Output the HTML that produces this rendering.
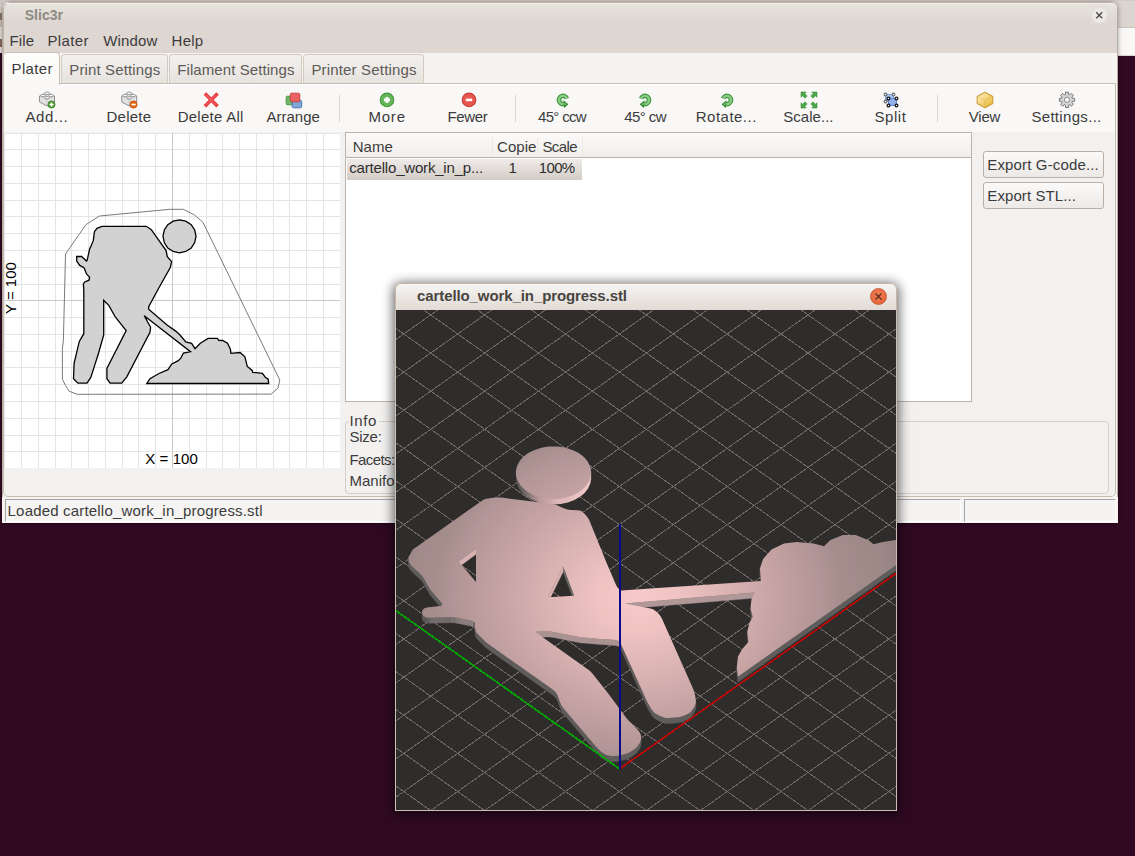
<!DOCTYPE html>
<html><head><meta charset="utf-8">
<style>
*{margin:0;padding:0;box-sizing:border-box}
html,body{width:1135px;height:856px;overflow:hidden;background:#300a23;font-family:"Liberation Sans",sans-serif;color:#3c3c3c}
.a{position:absolute}
.t{position:absolute;white-space:nowrap;font-size:15px;line-height:20px}
#win{left:3px;top:2px;width:1114px;height:520px;border-radius:6px 6px 0 0;background:#f2f1f0;border:1px solid #b5aca4;overflow:hidden}
#title{left:0;top:0;width:1112px;height:50px;background:linear-gradient(#e6e3de,#dfd8d2 40%,#dfd8d2)}
.tab{position:absolute;top:54px;height:29px;border:1px solid #d3cac1;border-bottom:none;border-radius:4px 4px 0 0;background:linear-gradient(#f3f1ef,#e6e2de);color:#5e5a56}
.tb{position:absolute;top:109px;font-size:14px;line-height:16px;white-space:nowrap;text-align:center;width:100px;margin-left:-50px}
.sep{position:absolute;top:95px;width:1px;height:27px;background:#dcd6d0}
.ico{position:absolute;top:91px;width:18px;height:18px;margin-left:-9px}
</style></head><body>
<!-- background windows -->
<div class="a" style="left:0;top:0;width:1135px;height:56px;background:#dcd5cf"></div>
<div class="a" style="left:0;top:0;width:1135px;height:1px;background:#d2cdc8"></div>
<div class="a" style="left:1118px;top:28px;width:17px;height:27px;background:#f9f8f6"></div>
<div class="a" style="left:0;top:0;width:3px;height:5px;background:#cfc9c3"></div>
<div class="a" style="left:0;top:5px;width:3px;height:16px;background:#d8d2cc"></div>
<div class="a" style="left:0;top:13px;width:2px;height:7px;background:#8a7a6a"></div>
<div class="a" style="left:0;top:21px;width:3px;height:6px;background:#c5bfb9"></div>
<div class="a" style="left:0;top:27px;width:3px;height:26px;background:#e6e3e0"></div>
<div class="a" style="left:0;top:39px;width:2px;height:8px;background:#8a6a5a"></div>
<div class="a" style="left:0;top:53px;width:3px;height:3px;background:#300a23"></div>
<div class="a" style="left:1118px;top:27px;width:17px;height:1px;background:#c9c4bf"></div>

<div class="a" style="left:2px;top:1px;width:1116px;height:522px;border-radius:7px 7px 0 0;box-shadow:0 1px 5px rgba(0,0,0,0.35)"></div>
<div id="win" class="a" style="left:2px;top:1px;width:1116px;height:522px;border-radius:7px 7px 0 0;background:#f5f4f2;overflow:hidden">
  <div class="a" style="left:0;top:0;width:1116px;height:51px;background:linear-gradient(#e7e4de,#ded7d1 38%,#ded6d1);border:1px solid #bfb2a6;border-bottom:none;border-radius:7px 7px 0 0"></div>
  <div class="a" style="left:1px;top:1px;width:1114px;height:1px;background:#eeece8"></div>
</div>
<!-- close btn -->
<div class="a" style="left:1090px;top:6px;width:18px;height:18px;background:#e2ddd8;opacity:0.6"></div>
<div class="a" style="left:1091.5px;top:7.5px;width:15.5px;height:15.5px;border-radius:8px;background:#ece9e6"></div>
<svg class="a" style="left:1094px;top:10px" width="11" height="11"><path d="M2.3 2.3L8.2 8.2M8.2 2.3L2.3 8.2" stroke="#4a4744" stroke-width="1.3"/></svg>

<!-- notebook page -->
<div class="a" style="left:3px;top:83px;width:1113px;height:414px;background:#f2f1f0;border:1px solid #c9bdb1;border-radius:0 0 5px 5px"></div>
<div class="a" style="left:4px;top:84px;width:1111px;height:1px;background:#fff"></div>
<!-- toolbar bg -->
<div class="a" style="left:4px;top:85px;width:1111px;height:47px;background:#f9f8f7"></div>
<!-- tabs -->
<div class="tab" style="left:61px;width:107px"></div>
<div class="tab" style="left:169px;width:133px"></div>
<div class="tab" style="left:303px;width:121px"></div>
<div class="a" style="left:3px;top:52px;width:57px;height:33px;border:1px solid #c9bdb1;border-bottom:none;border-radius:4px 4px 0 0;background:linear-gradient(#fdfdfc,#f9f8f7)"></div>

<!-- toolbar -->
<div class="sep" style="left:339px"></div>
<div class="sep" style="left:515px"></div>
<div class="sep" style="left:937px"></div>

<svg class="a" style="left:0;top:0" width="1135" height="130"><g transform="translate(34,88)"><g transform="translate(5,3.5) scale(1.0)">
<path d="M0.5 4.5 L8 1.2 L15.5 4.5 L15.5 10.5 L8 14.5 L0.5 10.5Z" fill="#e2e2e2" stroke="#8f8f8f" stroke-width="1" stroke-linejoin="round"/>
<path d="M0.5 4.5 L8 8.2 L15.5 4.5 M8 8.2 L8 14.5" fill="none" stroke="#8f8f8f" stroke-opacity="0.35" stroke-width="0.8"/>
<ellipse cx="8" cy="1.8" rx="2.4" ry="1.3" fill="#fbfbfb" stroke="#8f8f8f" stroke-width="0.9"/>
<ellipse cx="3.9" cy="4.0" rx="2.3" ry="1.2" fill="#fbfbfb" stroke="#8f8f8f" stroke-width="0.9"/>
<ellipse cx="12.1" cy="4.0" rx="2.3" ry="1.2" fill="#fbfbfb" stroke="#8f8f8f" stroke-width="0.9"/>
<ellipse cx="8" cy="6.2" rx="2.3" ry="1.2" fill="#fbfbfb" stroke="#8f8f8f" stroke-width="0.9"/>
</g><circle cx="17.5" cy="16.5" r="3.5" fill="#4f9e2e" stroke="#2f7a1a" stroke-width="0.8"/><path d="M17.5 14.4v4.2M15.4 16.5h4.2" stroke="#fff" stroke-width="1.5"/></g>
<g transform="translate(117,88)"><g transform="translate(4.2,3.5) scale(1.0)">
<path d="M0.5 4.5 L8 1.2 L15.5 4.5 L15.5 10.5 L8 14.5 L0.5 10.5Z" fill="#e2e2e2" stroke="#8f8f8f" stroke-width="1" stroke-linejoin="round"/>
<path d="M0.5 4.5 L8 8.2 L15.5 4.5 M8 8.2 L8 14.5" fill="none" stroke="#8f8f8f" stroke-opacity="0.35" stroke-width="0.8"/>
<ellipse cx="8" cy="1.8" rx="2.4" ry="1.3" fill="#fbfbfb" stroke="#8f8f8f" stroke-width="0.9"/>
<ellipse cx="3.9" cy="4.0" rx="2.3" ry="1.2" fill="#fbfbfb" stroke="#8f8f8f" stroke-width="0.9"/>
<ellipse cx="12.1" cy="4.0" rx="2.3" ry="1.2" fill="#fbfbfb" stroke="#8f8f8f" stroke-width="0.9"/>
<ellipse cx="8" cy="6.2" rx="2.3" ry="1.2" fill="#fbfbfb" stroke="#8f8f8f" stroke-width="0.9"/>
</g><circle cx="16.5" cy="16.5" r="3.6" fill="#e26a12" stroke="#c24a08" stroke-width="0.8"/><path d="M14.3 16.5h4.4" stroke="#fff" stroke-width="1.6"/></g>
<g transform="translate(199,88)"><path d="M7.2 6.8 L17.3 16.9 M17.3 6.8 L7.2 16.9" stroke="#ea3c42" stroke-width="3.6" stroke-linecap="square"/><path d="M7.2 6.8 L17.3 16.9 M17.3 6.8 L7.2 16.9" stroke="#f57a7e" stroke-width="1.2" stroke-opacity="0.6"/></g>
<g transform="translate(281,88)"><rect x="5.2" y="8.2" width="6.5" height="8.6" rx="1.2" fill="#6fb86a" stroke="#3f8f3a" stroke-width="0.9"/><rect x="11.2" y="12.2" width="9.5" height="7.6" rx="1.4" fill="#7ea6d6" stroke="#3f6fb0" stroke-width="0.9"/><rect x="9.3" y="5.2" width="9.5" height="8.6" rx="1.4" fill="#ea6262" stroke="#c83a3a" stroke-width="0.9"/></g>
<g transform="translate(375,88)"><circle cx="12" cy="11.9" r="6.8" fill="#66b55a" stroke="#3e9a36" stroke-width="1.1"/><path d="M12 8.9v6M9 11.9h6" stroke="#fff" stroke-width="2.8"/></g>
<g transform="translate(457,88)"><circle cx="12" cy="11.9" r="6.8" fill="#e8574f" stroke="#c63a34" stroke-width="1.1"/><path d="M8.8 11.9h6.4" stroke="#fff" stroke-width="2.6"/></g>
<g transform="translate(551,88)"><path d="M15.9 10.5 A4.1 4.1 0 1 0 13.3 15.9" fill="none" stroke="#3c963a" stroke-width="4.6"/>
<path d="M15.9 10.5 A4.1 4.1 0 1 0 13.3 15.9" fill="none" stroke="#8ccc86" stroke-width="2.4"/>
<path d="M12.4 12.2 L17.4 16.3 L13.1 20.0Z" fill="#2f862f"/>
<path d="M13.3 14.0 L15.6 16.2 L13.6 17.8Z" fill="#7cc276"/></g>
<g transform="translate(633,88)"><g transform="translate(24,0) scale(-1,1)"><path d="M15.9 10.5 A4.1 4.1 0 1 0 13.3 15.9" fill="none" stroke="#3c963a" stroke-width="4.6"/>
<path d="M15.9 10.5 A4.1 4.1 0 1 0 13.3 15.9" fill="none" stroke="#8ccc86" stroke-width="2.4"/>
<path d="M12.4 12.2 L17.4 16.3 L13.1 20.0Z" fill="#2f862f"/>
<path d="M13.3 14.0 L15.6 16.2 L13.6 17.8Z" fill="#7cc276"/></g></g>
<g transform="translate(715,88)"><g transform="translate(24,0) scale(-1,1)"><path d="M15.9 10.5 A4.1 4.1 0 1 0 13.3 15.9" fill="none" stroke="#3c963a" stroke-width="4.6"/>
<path d="M15.9 10.5 A4.1 4.1 0 1 0 13.3 15.9" fill="none" stroke="#8ccc86" stroke-width="2.4"/>
<path d="M12.4 12.2 L17.4 16.3 L13.1 20.0Z" fill="#2f862f"/>
<path d="M13.3 14.0 L15.6 16.2 L13.6 17.8Z" fill="#7cc276"/></g></g>
<g transform="translate(797,88)"><g><path d="M4 4 H9.2 L7.8 5.6 L10.2 8.0 L8.0 10.2 L5.6 7.8 L4 9.2Z" fill="#4aa84a" stroke="#3a8f3a" stroke-width="0.6"/></g><g transform="translate(24,0) scale(-1,1)"><path d="M4 4 H9.2 L7.8 5.6 L10.2 8.0 L8.0 10.2 L5.6 7.8 L4 9.2Z" fill="#4aa84a" stroke="#3a8f3a" stroke-width="0.6"/></g><g transform="translate(0,24) scale(1,-1)"><path d="M4 4 H9.2 L7.8 5.6 L10.2 8.0 L8.0 10.2 L5.6 7.8 L4 9.2Z" fill="#4aa84a" stroke="#3a8f3a" stroke-width="0.6"/></g><g transform="translate(24,24) scale(-1,-1)"><path d="M4 4 H9.2 L7.8 5.6 L10.2 8.0 L8.0 10.2 L5.6 7.8 L4 9.2Z" fill="#4aa84a" stroke="#3a8f3a" stroke-width="0.6"/></g></g>
<g transform="translate(879,88)"><rect x="6.5" y="6.5" width="8" height="7" fill="#a9c4f0" stroke="#7aa0e8" stroke-width="1"/><rect x="9.5" y="10.5" width="8" height="7" fill="#8fb0e8" stroke="#5a88e0" stroke-width="1"/><circle cx="6.5" cy="6.5" r="1.4" fill="#fff" stroke="#666" stroke-width="1.1"/><circle cx="14.5" cy="6.5" r="1.4" fill="#fff" stroke="#666" stroke-width="1.1"/><circle cx="6.5" cy="13.5" r="1.4" fill="#fff" stroke="#666" stroke-width="1.1"/><circle cx="9.5" cy="10.5" r="1.4" fill="#fff" stroke="#111" stroke-width="1.2"/><circle cx="17.5" cy="10.5" r="1.4" fill="#fff" stroke="#111" stroke-width="1.2"/><circle cx="9.5" cy="17.5" r="1.4" fill="#fff" stroke="#111" stroke-width="1.2"/><circle cx="17.5" cy="17.5" r="1.4" fill="#fff" stroke="#111" stroke-width="1.2"/></g>
<g transform="translate(973,88)"><defs><linearGradient id="vg" x1="0" y1="0" x2="1" y2="1"><stop offset="0" stop-color="#fff3cc"/><stop offset="1" stop-color="#e8b22a"/></linearGradient></defs>
<path d="M12 4.3 L19.8 8.4 L19.8 15.4 L12 19.7 L4.2 15.4 L4.2 8.4Z" fill="url(#vg)" stroke="#cf9d3a" stroke-width="1.1" stroke-linejoin="round"/>
<path d="M5.5 9 L12 12.3 L18.5 9 M12 12.3 V18.5" fill="none" stroke="#d9a845" stroke-width="0.8" stroke-opacity="0.6"/></g>
<g transform="translate(1055,88)"><path d="M17.41 10.36 L19.64 10.25 L19.64 13.35 L17.41 13.24 L16.84 14.61 L18.50 16.11 L16.31 18.30 L14.81 16.64 L13.44 17.21 L13.55 19.44 L10.45 19.44 L10.56 17.21 L9.19 16.64 L7.69 18.30 L5.50 16.11 L7.16 14.61 L6.59 13.24 L4.36 13.35 L4.36 10.25 L6.59 10.36 L7.16 8.99 L5.50 7.49 L7.69 5.30 L9.19 6.96 L10.56 6.39 L10.45 4.16 L13.55 4.16 L13.44 6.39 L14.81 6.96 L16.31 5.30 L18.50 7.49 L16.84 8.99Z" fill="#d4d4d4" stroke="#6f6f6f" stroke-width="0.9" stroke-linejoin="round"/><circle cx="12" cy="11.8" r="2.6" fill="#fafafa" stroke="#7a7a7a" stroke-width="0.9"/></g></svg>
<!-- 2D plater canvas -->
<svg class="a" style="left:0;top:0" width="345" height="470">
  <rect x="5" y="133" width="335" height="335" fill="#fff"/>
  <g stroke="#e5e5e5" stroke-width="1" shape-rendering="crispEdges"><line x1="4.70" y1="133" x2="4.70" y2="468"/>
<line x1="5" y1="133.00" x2="340" y2="133.00"/>
<line x1="21.48" y1="133" x2="21.48" y2="468"/>
<line x1="5" y1="149.78" x2="340" y2="149.78"/>
<line x1="38.26" y1="133" x2="38.26" y2="468"/>
<line x1="5" y1="166.56" x2="340" y2="166.56"/>
<line x1="55.04" y1="133" x2="55.04" y2="468"/>
<line x1="5" y1="183.34" x2="340" y2="183.34"/>
<line x1="71.82" y1="133" x2="71.82" y2="468"/>
<line x1="5" y1="200.12" x2="340" y2="200.12"/>
<line x1="88.60" y1="133" x2="88.60" y2="468"/>
<line x1="5" y1="216.90" x2="340" y2="216.90"/>
<line x1="105.38" y1="133" x2="105.38" y2="468"/>
<line x1="5" y1="233.68" x2="340" y2="233.68"/>
<line x1="122.16" y1="133" x2="122.16" y2="468"/>
<line x1="5" y1="250.46" x2="340" y2="250.46"/>
<line x1="138.94" y1="133" x2="138.94" y2="468"/>
<line x1="5" y1="267.24" x2="340" y2="267.24"/>
<line x1="155.72" y1="133" x2="155.72" y2="468"/>
<line x1="5" y1="284.02" x2="340" y2="284.02"/>
<line x1="172.50" y1="133" x2="172.50" y2="468"/>
<line x1="5" y1="300.80" x2="340" y2="300.80"/>
<line x1="189.28" y1="133" x2="189.28" y2="468"/>
<line x1="5" y1="317.58" x2="340" y2="317.58"/>
<line x1="206.06" y1="133" x2="206.06" y2="468"/>
<line x1="5" y1="334.36" x2="340" y2="334.36"/>
<line x1="222.84" y1="133" x2="222.84" y2="468"/>
<line x1="5" y1="351.14" x2="340" y2="351.14"/>
<line x1="239.62" y1="133" x2="239.62" y2="468"/>
<line x1="5" y1="367.92" x2="340" y2="367.92"/>
<line x1="256.40" y1="133" x2="256.40" y2="468"/>
<line x1="5" y1="384.70" x2="340" y2="384.70"/>
<line x1="273.18" y1="133" x2="273.18" y2="468"/>
<line x1="5" y1="401.48" x2="340" y2="401.48"/>
<line x1="289.96" y1="133" x2="289.96" y2="468"/>
<line x1="5" y1="418.26" x2="340" y2="418.26"/>
<line x1="306.74" y1="133" x2="306.74" y2="468"/>
<line x1="5" y1="435.04" x2="340" y2="435.04"/>
<line x1="323.52" y1="133" x2="323.52" y2="468"/>
<line x1="5" y1="451.82" x2="340" y2="451.82"/></g>
  <line x1="172.5" y1="133" x2="172.5" y2="468" stroke="#c8c8c8" stroke-width="1"/>
  <line x1="5" y1="300.5" x2="340" y2="300.5" stroke="#c8c8c8" stroke-width="1"/>
  <polygon points="85.9,224.7 99.5,216.0 169.8,209.3 183.4,209.3 194.6,215.0 203.0,222.4 279.8,380.0 278.0,388.0 271.1,394.1 77.4,394.3 69.0,391.2 65.5,385.5 62.4,379.2 62.4,349.1 63.4,340.0 65.5,254.0" fill="none" stroke="#7a7a7a" stroke-width="1"/>
  <polygon points="101.9,226.3 146.3,226.3 151.3,229.6 166.1,250.6 167.3,256.7 171.6,261.7 170.4,267.2 157.7,290.0 148.7,306.7 148.7,309.3 166.7,324.7 175.7,331.1 180.0,335.0 185.8,341.8 191.6,343.3 195.0,348.6 200.3,343.3 208.1,338.4 217.3,338.4 218.8,340.3 222.6,340.5 227.5,343.3 230.4,349.1 230.9,353.4 240.1,352.5 244.9,356.8 247.3,366.5 252.2,370.4 252.7,372.3 262.4,373.3 265.3,377.2 268.2,379.1 268.7,383.5 146.8,383.5 150.0,378.7 159.0,373.5 168.0,369.7 171.8,363.9 178.3,360.7 180.8,358.1 183.4,353.0 190.5,351.7 144.2,315.7 150.6,327.3 150.0,332.4 126.8,376.8 121.7,383.2 110.1,383.2 106.9,378.7 106.9,368.4 126.2,330.5 120.4,323.4 115.3,317.0 108.8,305.4 103.7,300.3 103.7,335.0 98.6,353.0 94.1,367.1 90.8,377.4 87.0,383.2 78.0,383.2 73.5,378.7 74.1,363.3 79.3,341.4 83.8,333.7 83.8,290.0 83.4,283.9 84.7,282.0 89.0,280.2 89.6,277.1 86.5,274.0 84.0,267.8 79.7,265.4 76.7,261.0 76.7,256.5 81.6,256.5 86.5,261.0 87.1,260.4 89.6,249.3 93.3,240.7 94.5,231.5 97.0,228.4" fill="#d2d2d2" stroke="#000" stroke-width="1.3"/>
  <polygon points="196.0,236.3 194.7,242.6 191.2,248.0 185.8,251.5 179.5,252.8 173.2,251.5 167.8,248.0 164.3,242.6 163.0,236.3 164.3,230.0 167.8,224.6 173.2,221.1 179.5,219.8 185.8,221.1 191.2,224.6 194.7,230.0" fill="#d2d2d2" stroke="#000" stroke-width="1.3"/>
</svg>
<div class="t" style="left:1px;top:300px;color:#000;transform:rotate(-90deg);transform-origin:0 0;margin-top:14px">Y = 100</div>

<!-- list view -->
<div class="a" style="left:345px;top:132px;width:627px;height:270px;background:#fff;border:1px solid #bdb4ad"></div>
<div class="a" style="left:346px;top:133px;width:625px;height:25px;background:linear-gradient(#fbfaf9,#f1eeeb);border-bottom:1px solid #b9b0a8"></div>
<div class="a" style="left:492px;top:137px;width:1px;height:19px;background:#ece8e4"></div>
<div class="a" style="left:537px;top:137px;width:1px;height:19px;background:#ece8e4"></div>
<div class="a" style="left:582px;top:137px;width:1px;height:19px;background:#ece8e4"></div>
<div class="a" style="left:347px;top:159px;width:235px;height:21px;background:linear-gradient(#efebe8,#d3ccc6)"></div>

<!-- buttons -->
<div class="a" style="left:983px;top:151px;width:121px;height:27px;border:1px solid #b9afa7;border-radius:3px;background:linear-gradient(#fbfaf9,#ece9e6)"></div>
<div class="a" style="left:983px;top:182px;width:121px;height:27px;border:1px solid #b9afa7;border-radius:3px;background:linear-gradient(#fbfaf9,#ece9e6)"></div>

<!-- info group -->
<div class="a" style="left:345px;top:421px;width:764px;height:73px;border:1px solid #d6cfc9;border-radius:4px"></div>
<div class="a" style="left:349px;top:414px;width:30px;height:12px;background:#f2f1f0"></div>

<!-- status bar -->
<div class="a" style="left:2px;top:497px;width:1116px;height:26px;background:#f5f4f2"></div>
<div class="a" style="left:5px;top:499px;width:956px;height:23px;border-left:1px solid #a3a3a3;border-top:1px solid #a3a3a3;border-right:1px solid #fff;border-bottom:1px solid #fff"></div>
<div class="a" style="left:964px;top:499px;width:152px;height:23px;border-left:1px solid #a3a3a3;border-top:1px solid #a3a3a3;border-right:1px solid #fff;border-bottom:1px solid #fff"></div>

<div class="t" style="left:24.7px;top:4.7px;font-size:14px;font-weight:700;color:#8e8983;letter-spacing:0.040px;">Slic3r</div>
<div class="t" style="left:9.6px;top:30.9px;font-size:15px;font-weight:400;color:#3c3c3c;letter-spacing:0.100px;">File</div>
<div class="t" style="left:47.5px;top:30.9px;font-size:15px;font-weight:400;color:#3c3c3c;letter-spacing:0.340px;">Plater</div>
<div class="t" style="left:103.2px;top:30.9px;font-size:15px;font-weight:400;color:#3c3c3c;letter-spacing:0.160px;">Window</div>
<div class="t" style="left:171.6px;top:30.9px;font-size:15px;font-weight:400;color:#3c3c3c;letter-spacing:0.233px;">Help</div>
<div class="t" style="left:11.6px;top:58.6px;font-size:15px;font-weight:400;color:#3c3c3c;letter-spacing:0.320px;">Plater</div>
<div class="t" style="left:69.3px;top:59.8px;font-size:15px;font-weight:400;color:#5e5a56;letter-spacing:0.131px;">Print Settings</div>
<div class="t" style="left:177.3px;top:59.8px;font-size:15px;font-weight:400;color:#5e5a56;letter-spacing:0.075px;">Filament Settings</div>
<div class="t" style="left:311.4px;top:59.8px;font-size:15px;font-weight:400;color:#5e5a56;letter-spacing:0.173px;">Printer Settings</div>
<div class="t" style="left:25.5px;top:106.7px;font-size:15px;font-weight:400;color:#3c3c3c;letter-spacing:0.620px;">Add...</div>
<div class="t" style="left:106.5px;top:106.7px;font-size:15px;font-weight:400;color:#3c3c3c;letter-spacing:0.240px;">Delete</div>
<div class="t" style="left:177.7px;top:106.7px;font-size:15px;font-weight:400;color:#3c3c3c;letter-spacing:0.256px;">Delete All</div>
<div class="t" style="left:266.6px;top:106.7px;font-size:15px;font-weight:400;color:#3c3c3c;letter-spacing:-0.017px;">Arrange</div>
<div class="t" style="left:368.5px;top:106.7px;font-size:15px;font-weight:400;color:#3c3c3c;letter-spacing:0.767px;">More</div>
<div class="t" style="left:447.5px;top:106.7px;font-size:15px;font-weight:400;color:#3c3c3c;letter-spacing:-0.375px;">Fewer</div>
<div class="t" style="left:538.0px;top:106.7px;font-size:15px;font-weight:400;color:#3c3c3c;letter-spacing:-0.667px;">45° ccw</div>
<div class="t" style="left:624.3px;top:106.7px;font-size:15px;font-weight:400;color:#3c3c3c;letter-spacing:-0.600px;">45° cw</div>
<div class="t" style="left:695.8px;top:106.7px;font-size:15px;font-weight:400;color:#3c3c3c;letter-spacing:0.475px;">Rotate...</div>
<div class="t" style="left:783.2px;top:106.7px;font-size:15px;font-weight:400;color:#3c3c3c;letter-spacing:0.043px;">Scale...</div>
<div class="t" style="left:874.4px;top:106.7px;font-size:15px;font-weight:400;color:#3c3c3c;letter-spacing:0.575px;">Split</div>
<div class="t" style="left:968.8px;top:106.7px;font-size:15px;font-weight:400;color:#3c3c3c;letter-spacing:-0.200px;">View</div>
<div class="t" style="left:1031.4px;top:106.7px;font-size:15px;font-weight:400;color:#3c3c3c;letter-spacing:0.320px;">Settings...</div>
<div class="t" style="left:352.7px;top:136.7px;font-size:15px;font-weight:400;color:#3c3c3c;letter-spacing:0.067px;">Name</div>
<div class="t" style="left:497.0px;top:136.7px;font-size:15px;font-weight:400;color:#3c3c3c;letter-spacing:0.050px;">Copie</div>
<div class="t" style="left:542.4px;top:136.7px;font-size:15px;font-weight:400;color:#3c3c3c;letter-spacing:-0.575px;">Scale</div>
<div class="t" style="left:349.3px;top:157.9px;font-size:15px;font-weight:400;color:#2e2e2e;letter-spacing:-0.190px;">cartello_work_in_p...</div>
<div class="t" style="left:508.5px;top:157.9px;font-size:15px;font-weight:400;color:#2e2e2e;letter-spacing:0.000px;">1</div>
<div class="t" style="left:538.8px;top:157.9px;font-size:15px;font-weight:400;color:#2e2e2e;letter-spacing:-0.667px;">100%</div>
<div class="t" style="left:987.3px;top:155.0px;font-size:15px;font-weight:400;color:#3c3c3c;letter-spacing:0.147px;">Export G-code...</div>
<div class="t" style="left:987.3px;top:186.4px;font-size:15px;font-weight:400;color:#3c3c3c;letter-spacing:0.083px;">Export STL...</div>
<div class="t" style="left:349.5px;top:410.6px;font-size:15px;font-weight:400;color:#3c3c3c;letter-spacing:0.600px;">Info</div>
<div class="t" style="left:349.5px;top:427.4px;font-size:15px;font-weight:400;color:#3c3c3c;letter-spacing:-0.250px;">Size:</div>
<div class="t" style="left:349.5px;top:449.9px;font-size:15px;font-weight:400;color:#3c3c3c;letter-spacing:-0.583px;">Facets:</div>
<div class="t" style="left:349.5px;top:470.9px;font-size:15px;font-weight:400;color:#3c3c3c;letter-spacing:0.000px;">Manifold:</div>
<div class="t" style="left:7.6px;top:501.0px;font-size:15px;font-weight:400;color:#3c3c3c;letter-spacing:0.183px;">Loaded cartello_work_in_progress.stl</div>
<div class="t" style="left:145.3px;top:448.8px;font-size:15px;font-weight:400;color:#000;letter-spacing:0.067px;">X = 100</div>
<!-- 3D window -->
<div class="a" style="left:395px;top:283px;width:502px;height:528px;border-radius:6px 6px 0 0;box-shadow:0 2px 12px 2px rgba(0,0,0,0.6)"></div>
<div class="a" style="left:395px;top:283px;width:502px;height:528px;border-radius:6px 6px 0 0;background:#cbc0b6;overflow:hidden">
  <div class="a" style="left:0;top:0;width:502px;height:27px;background:linear-gradient(#f7f6f4,#ebe7e3 50%,#e2dbd5);border:1px solid #c8b4a2;border-bottom:none;border-radius:6px 6px 0 0"></div>
</div>
<div class="t" style="left:417.0px;top:285.7px;font-size:15px;font-weight:700;color:#48443f;letter-spacing:-0.093px;">cartello_work_in_progress.stl</div>
<div class="a" style="left:870px;top:288px;width:17px;height:17px;border-radius:9px;background:radial-gradient(circle at 50% 40%,#f4845a,#e1592c);border:1px solid #c9613f"></div>
<svg class="a" style="left:874px;top:292px" width="9" height="9"><path d="M1.5 1.5L7.5 7.5M7.5 1.5L1.5 7.5" stroke="#5a2a1a" stroke-width="1.3"/></svg>

<svg class="a" style="left:0;top:0" width="1135" height="856">
  <defs>
    <clipPath id="c3"><rect x="396" y="310" width="500" height="500"/></clipPath>
    <radialGradient id="pk" gradientUnits="userSpaceOnUse" cx="0" cy="0" r="1" gradientTransform="translate(638 598) scale(270 225)">
      <stop offset="0" stop-color="#f7c9ca"/>
      <stop offset="0.15" stop-color="#f0c3c3"/>
      <stop offset="0.5" stop-color="#c7a4a4"/>
      <stop offset="0.68" stop-color="#b29596"/>
      <stop offset="0.76" stop-color="#a58d8c"/>
      <stop offset="0.92" stop-color="#9c8886"/>
      <stop offset="1" stop-color="#958280"/>
    </radialGradient>
  </defs>
  <g clip-path="url(#c3)">
    <rect x="396" y="310" width="500" height="500" fill="#2f2d2c"/>
    <g stroke="#6e6564" stroke-width="1" shape-rendering="crispEdges"><line x1="380" y1="-64.16" x2="910" y2="310.76"/>
<line x1="380" y1="-26.03" x2="910" y2="348.89"/>
<line x1="380" y1="12.10" x2="910" y2="387.02"/>
<line x1="380" y1="50.23" x2="910" y2="425.15"/>
<line x1="380" y1="88.36" x2="910" y2="463.28"/>
<line x1="380" y1="126.49" x2="910" y2="501.41"/>
<line x1="380" y1="164.62" x2="910" y2="539.54"/>
<line x1="380" y1="202.75" x2="910" y2="577.67"/>
<line x1="380" y1="240.88" x2="910" y2="615.80"/>
<line x1="380" y1="279.01" x2="910" y2="653.93"/>
<line x1="380" y1="317.14" x2="910" y2="692.06"/>
<line x1="380" y1="355.27" x2="910" y2="730.19"/>
<line x1="380" y1="393.40" x2="910" y2="768.32"/>
<line x1="380" y1="431.53" x2="910" y2="806.45"/>
<line x1="380" y1="469.66" x2="910" y2="844.58"/>
<line x1="380" y1="507.79" x2="910" y2="882.71"/>
<line x1="380" y1="545.92" x2="910" y2="920.84"/>
<line x1="380" y1="584.05" x2="910" y2="958.97"/>
<line x1="380" y1="622.18" x2="910" y2="997.10"/>
<line x1="380" y1="660.31" x2="910" y2="1035.23"/>
<line x1="380" y1="698.44" x2="910" y2="1073.36"/>
<line x1="380" y1="736.57" x2="910" y2="1111.49"/>
<line x1="380" y1="774.70" x2="910" y2="1149.62"/>
<line x1="380" y1="812.83" x2="910" y2="1187.75"/>
<line x1="380" y1="312.66" x2="910" y2="-62.26"/>
<line x1="380" y1="350.79" x2="910" y2="-24.13"/>
<line x1="380" y1="388.92" x2="910" y2="14.00"/>
<line x1="380" y1="427.05" x2="910" y2="52.13"/>
<line x1="380" y1="465.18" x2="910" y2="90.26"/>
<line x1="380" y1="503.31" x2="910" y2="128.39"/>
<line x1="380" y1="541.44" x2="910" y2="166.52"/>
<line x1="380" y1="579.57" x2="910" y2="204.65"/>
<line x1="380" y1="617.70" x2="910" y2="242.78"/>
<line x1="380" y1="655.83" x2="910" y2="280.91"/>
<line x1="380" y1="693.96" x2="910" y2="319.04"/>
<line x1="380" y1="732.09" x2="910" y2="357.17"/>
<line x1="380" y1="770.22" x2="910" y2="395.30"/>
<line x1="380" y1="808.35" x2="910" y2="433.43"/>
<line x1="380" y1="846.48" x2="910" y2="471.56"/>
<line x1="380" y1="884.61" x2="910" y2="509.69"/>
<line x1="380" y1="922.74" x2="910" y2="547.82"/>
<line x1="380" y1="960.87" x2="910" y2="585.95"/>
<line x1="380" y1="999.00" x2="910" y2="624.08"/>
<line x1="380" y1="1037.13" x2="910" y2="662.21"/>
<line x1="380" y1="1075.26" x2="910" y2="700.34"/>
<line x1="380" y1="1113.39" x2="910" y2="738.47"/>
<line x1="380" y1="1151.52" x2="910" y2="776.60"/>
<line x1="380" y1="1189.65" x2="910" y2="814.73"/></g>
    <defs><linearGradient id="hs" gradientUnits="userSpaceOnUse" x1="516" y1="0" x2="591" y2="0"><stop offset="0" stop-color="#555353"/><stop offset="0.12" stop-color="#6e6868"/><stop offset="0.3" stop-color="#b89898"/><stop offset="0.55" stop-color="#dcb6b6"/><stop offset="1" stop-color="#f2caca"/></linearGradient></defs>
<rect x="515.9" y="472.7" width="75.2" height="5.5" fill="url(#hs)"/><ellipse cx="553.5" cy="478.2" rx="37.6" ry="26.3" fill="url(#hs)"/>
<polygon points="761.0,581.0 759.9,568.4 759.9,573.9 761.0,586.5" fill="#5f5c5c" stroke="#5f5c5c" stroke-width="0.4" stroke-linejoin="round"/>
<polygon points="910.0,555.3 737.9,676.7 736.8,667.2 736.8,672.7 737.9,682.2 910.0,560.8" fill="#5f5c5c" stroke="#5f5c5c" stroke-width="0.4" stroke-linejoin="round"/>
<polygon points="748.4,642.0 747.3,631.5 747.3,637.0 748.4,647.5" fill="#5f5c5c" stroke="#5f5c5c" stroke-width="0.4" stroke-linejoin="round"/>
<polygon points="752.6,616.7 750.5,608.3 750.5,613.8 752.6,622.2" fill="#5f5c5c" stroke="#5f5c5c" stroke-width="0.4" stroke-linejoin="round"/>
<polygon points="754.7,592.6 624.5,603.4 624.5,608.9 754.7,598.1" fill="#b09898" stroke="#b09898" stroke-width="0.4" stroke-linejoin="round"/>
<polygon points="695.9,702.3 695.5,704.2 694.5,706.6 692.7,709.5 691.1,711.6 689.7,712.9 687.1,714.2 683.3,715.9 680.5,716.8 678.6,717.3 675.6,717.6 668.7,718.1 665.8,718.0 663.9,717.6 661.1,716.5 657.1,714.5 654.6,712.9 653.2,711.6 651.6,709.5 649.8,706.6 648.5,704.2 647.5,702.5 646.2,699.8 620.9,643.9 620.9,649.4 646.2,705.3 647.5,708.0 648.5,709.7 649.8,712.1 651.6,715.0 653.2,717.1 654.6,718.4 657.1,720.0 661.1,722.0 663.9,723.1 665.8,723.5 668.7,723.6 675.6,723.1 678.6,722.8 680.5,722.3 683.3,721.4 687.1,719.7 689.7,718.4 691.1,717.1 692.7,715.0 694.5,712.1 695.5,709.7 695.9,707.8" fill="#5f5c5c" stroke="#5f5c5c" stroke-width="0.4" stroke-linejoin="round"/>
<polygon points="620.9,643.9 619.3,641.6 617.9,640.6 615.2,640.0 602.5,639.1 599.5,638.9 597.5,638.7 594.5,638.5 584.0,637.6 581.0,637.4 579.1,637.1 576.1,636.5 554.9,632.3 551.9,631.8 550.0,631.6 547.0,631.5 538.6,631.5 536.5,631.8 536.3,632.4 536.3,637.9 536.5,637.3 538.6,637.0 547.0,637.0 550.0,637.1 551.9,637.3 554.9,637.8 576.1,642.0 579.1,642.6 581.0,642.9 584.0,643.1 594.5,644.0 597.5,644.2 599.5,644.4 602.5,644.6 615.2,645.5 617.9,646.1 619.3,647.1 620.9,649.4" fill="#a89292" stroke="#a89292" stroke-width="0.4" stroke-linejoin="round"/>
<polygon points="641.1,737.2 641.1,739.0 640.7,740.8 640.0,742.7 638.8,744.6 637.6,746.3 636.3,747.7 634.4,749.3 631.8,751.1 629.7,752.4 627.9,753.2 625.6,754.0 622.7,754.8 620.4,755.3 618.5,755.7 616.7,755.9 614.8,756.1 613.0,756.1 611.2,756.0 609.3,755.7 607.5,755.3 605.7,754.7 604.0,753.8 602.4,752.7 600.7,751.4 599.2,750.0 597.8,748.6 595.8,746.4 564.0,709.0 562.2,706.6 561.2,704.9 560.0,702.2 557.7,695.8 556.4,693.2 555.2,691.7 553.0,689.8 489.3,644.8 486.9,643.0 485.4,641.7 483.2,639.6 478.3,634.8 476.5,632.7 475.7,631.2 475.2,629.7 475.1,628.2 474.9,626.8 474.8,625.4 474.7,624.2 474.7,623.1 474.1,622.1 473.1,621.4 473.1,626.9 474.1,627.6 474.7,628.6 474.7,629.7 474.8,630.9 474.9,632.3 475.1,633.7 475.2,635.2 475.7,636.7 476.5,638.2 478.3,640.3 483.2,645.1 485.4,647.2 486.9,648.5 489.3,650.3 553.0,695.3 555.2,697.2 556.4,698.7 557.7,701.3 560.0,707.7 561.2,710.4 562.2,712.1 564.0,714.5 595.8,751.9 597.8,754.1 599.2,755.5 600.7,756.9 602.4,758.2 604.0,759.3 605.7,760.2 607.5,760.8 609.3,761.2 611.2,761.5 613.0,761.6 614.8,761.6 616.7,761.4 618.5,761.2 620.4,760.8 622.7,760.3 625.6,759.5 627.9,758.7 629.7,757.9 631.8,756.6 634.4,754.8 636.3,753.2 637.6,751.8 638.8,750.1 640.0,748.2 640.7,746.3 641.1,744.5 641.1,742.7" fill="#5f5c5c" stroke="#5f5c5c" stroke-width="0.4" stroke-linejoin="round"/>
<polygon points="473.1,621.4 470.7,620.6 470.7,626.1 473.1,626.9" fill="#928484" stroke="#928484" stroke-width="0.4" stroke-linejoin="round"/>
<polygon points="470.7,620.6 458.2,617.9 458.2,623.4 470.7,626.1" fill="#8a7e7e" stroke="#8a7e7e" stroke-width="0.4" stroke-linejoin="round"/>
<polygon points="458.2,617.9 455.3,617.4 455.3,622.9 458.2,623.4" fill="#837878" stroke="#837878" stroke-width="0.4" stroke-linejoin="round"/>
<polygon points="455.3,617.4 453.3,617.2 453.3,622.7 455.3,622.9" fill="#807676" stroke="#807676" stroke-width="0.4" stroke-linejoin="round"/>
<polygon points="453.3,617.2 450.3,617.2 450.3,622.7 453.3,622.7" fill="#7e7474" stroke="#7e7474" stroke-width="0.4" stroke-linejoin="round"/>
<polygon points="450.3,617.2 429.4,617.7 429.4,623.2 450.3,622.7" fill="#726b6b" stroke="#726b6b" stroke-width="0.4" stroke-linejoin="round"/>
<polygon points="429.4,617.7 426.7,617.6 426.7,623.1 429.4,623.2" fill="#666261" stroke="#666261" stroke-width="0.4" stroke-linejoin="round"/>
<polygon points="426.7,617.6 425.3,617.2 425.3,622.7 426.7,623.1" fill="#646160" stroke="#646160" stroke-width="0.4" stroke-linejoin="round"/>
<polygon points="425.3,617.2 424.2,616.6 424.2,622.1 425.3,622.7" fill="#63605f" stroke="#63605f" stroke-width="0.4" stroke-linejoin="round"/>
<polygon points="424.2,616.6 423.5,615.9 422.9,615.0 422.4,614.1 422.1,613.1 422.1,612.0 422.1,617.5 422.1,618.6 422.4,619.6 422.9,620.5 423.5,621.4 424.2,622.1" fill="#5f5c5c" stroke="#5f5c5c" stroke-width="0.4" stroke-linejoin="round"/>
<polygon points="442.3,604.4 441.2,602.5 432.6,592.6 430.8,590.3 429.6,588.7 428.1,586.1 424.1,579.1 422.5,576.6 421.3,575.1 419.2,572.9 412.2,566.5 410.3,564.4 409.5,563.0 408.9,561.4 408.7,559.8 408.5,558.6 408.4,557.9 408.3,557.5 408.3,563.0 408.4,563.4 408.5,564.1 408.7,565.3 408.9,566.9 409.5,568.5 410.3,569.9 412.2,572.0 419.2,578.4 421.3,580.6 422.5,582.1 424.1,584.6 428.1,591.6 429.6,594.2 430.8,595.8 432.6,598.1 441.2,608.0 442.3,609.9" fill="#5f5c5c" stroke="#5f5c5c" stroke-width="0.4" stroke-linejoin="round"/>
<polygon points="476.0,548.8 458.8,561.6 458.8,567.1 476.0,554.3" fill="#d9b2b2" stroke="#d9b2b2" stroke-width="0.4" stroke-linejoin="round"/>
<polygon points="574.2,595.8 563.1,566.3 563.1,571.8 574.2,601.3" fill="#6a6666" stroke="#6a6666" stroke-width="0.4" stroke-linejoin="round"/>
<polygon points="563.1,566.3 547.9,597.3 547.9,602.8 563.1,571.8" fill="#d9b2b2" stroke="#d9b2b2" stroke-width="0.4" stroke-linejoin="round"/>
<path d="M412.8 549.5 L413.2 549.2 L414.1 548.6 L416.1 547.2 L480.9 501.4 L483.4 499.8 L485.2 499.1 L488.1 498.5 L493.5 497.7 L496.5 497.4 L498.5 497.4 L501.4 497.6 L551.0 503.7 L553.9 504.2 L555.8 504.7 L558.6 505.9 L563.1 508.0 L565.8 509.1 L567.7 509.6 L570.7 509.9 L577.6 510.3 L580.5 510.8 L582.1 511.6 L584.0 513.2 L586.1 515.5 L587.7 517.5 L588.8 519.2 L590.0 521.9 L603.3 554.8 L604.4 557.5 L605.2 559.4 L606.3 562.2 L615.6 584.0 L616.8 586.5 L617.7 587.8 L618.7 588.8 L619.7 589.5 L620.5 590.1 L621.0 590.4 L621.3 590.6 L761.0 581.0 L759.9 568.4 L763.1 558.9 L771.5 549.4 L784.1 543.6 L796.7 542.1 L813.6 543.6 L824.1 546.3 L830.4 540.0 L843.0 535.1 L855.6 535.1 L868.2 540.0 L873.5 544.2 L883.0 542.1 L895.6 540.0 L910.0 538.0 L910.0 555.3 L737.9 676.7 L736.8 667.2 L737.9 656.7 L742.1 649.3 L748.4 642.0 L747.3 631.5 L749.4 623.0 L752.6 616.7 L750.5 608.3 L751.5 598.9 L754.7 592.6 L624.5 603.4 L625.0 603.5 L626.0 603.7 L628.4 604.2 L649.3 608.2 L652.2 609.0 L653.9 609.8 L655.8 611.2 L657.9 613.1 L659.6 614.9 L660.7 616.4 L662.1 619.1 L693.0 688.4 L694.1 691.2 L694.6 693.1 L695.2 695.9 L695.8 699.6 L695.9 702.3 L695.5 704.2 L694.5 706.6 L692.7 709.5 L691.1 711.6 L689.7 712.9 L687.1 714.2 L683.3 715.9 L680.5 716.8 L678.6 717.3 L675.6 717.6 L668.7 718.1 L665.8 718.0 L663.9 717.6 L661.1 716.5 L657.1 714.5 L654.6 712.9 L653.2 711.6 L651.6 709.5 L649.8 706.6 L648.5 704.2 L647.5 702.5 L646.2 699.8 L620.9 643.9 L619.3 641.6 L617.9 640.6 L615.2 640.0 L602.5 639.1 L599.5 638.9 L597.5 638.7 L594.5 638.5 L584.0 637.6 L581.0 637.4 L579.1 637.1 L576.1 636.5 L554.9 632.3 L551.9 631.8 L550.0 631.6 L547.0 631.5 L538.6 631.5 L536.5 631.8 L536.3 632.4 L537.8 633.8 L587.0 668.7 L589.4 670.5 L590.8 671.8 L592.8 674.1 L608.6 694.1 L610.4 696.4 L611.6 698.0 L613.4 700.4 L624.1 715.1 L625.9 717.5 L627.2 719.0 L629.3 721.2 L637.7 729.8 L639.5 732.0 L640.3 733.6 L640.9 735.4 L641.1 737.2 L641.1 739.0 L640.7 740.8 L640.0 742.7 L638.8 744.6 L637.6 746.3 L636.3 747.7 L634.4 749.3 L631.8 751.1 L629.7 752.4 L627.9 753.2 L625.6 754.0 L622.7 754.8 L620.4 755.3 L618.5 755.7 L616.7 755.9 L614.8 756.1 L613.0 756.1 L611.2 756.0 L609.3 755.7 L607.5 755.3 L605.7 754.7 L604.0 753.8 L602.4 752.7 L600.7 751.4 L599.2 750.0 L597.8 748.6 L595.8 746.4 L564.0 709.0 L562.2 706.6 L561.2 704.9 L560.0 702.2 L557.7 695.8 L556.4 693.2 L555.2 691.7 L553.0 689.8 L489.3 644.8 L486.9 643.0 L485.4 641.7 L483.2 639.6 L478.3 634.8 L476.5 632.7 L475.7 631.2 L475.2 629.7 L475.1 628.2 L474.9 626.8 L474.8 625.4 L474.7 624.2 L474.7 623.1 L474.1 622.1 L473.1 621.4 L470.7 620.6 L458.2 617.9 L455.3 617.4 L453.3 617.2 L450.3 617.2 L429.4 617.7 L426.7 617.6 L425.3 617.2 L424.2 616.6 L423.5 615.9 L422.9 615.0 L422.4 614.1 L422.1 613.1 L422.1 612.0 L422.2 611.0 L422.6 610.1 L423.2 609.4 L424.1 608.6 L425.2 608.1 L426.7 607.6 L428.7 607.2 L431.3 607.0 L433.6 606.7 L435.6 606.5 L437.9 606.2 L440.5 605.9 L442.0 605.3 L442.3 604.4 L441.2 602.5 L432.6 592.6 L430.8 590.3 L429.6 588.7 L428.1 586.1 L424.1 579.1 L422.5 576.6 L421.3 575.1 L419.2 572.9 L412.2 566.5 L410.3 564.4 L409.5 563.0 L408.9 561.4 L408.7 559.8 L408.5 558.6 L408.4 557.9 L408.3 557.5Z M476.0 548.8 L458.8 561.6 L476.0 582.0Z M563.1 566.3 L547.9 597.3 L574.2 595.8Z" fill="url(#pk)" fill-rule="evenodd"/>
<polygon points="591.1,472.7 591.0,475.0 590.5,477.3 589.8,479.5 588.8,481.7 587.6,483.8 586.1,485.8 584.3,487.8 582.3,489.6 580.1,491.3 577.7,492.8 575.1,494.2 572.3,495.5 569.4,496.5 566.4,497.4 563.2,498.1 560.0,498.6 556.8,498.9 553.5,499.0 550.2,498.9 547.0,498.6 543.8,498.1 540.6,497.4 537.6,496.5 534.7,495.5 531.9,494.2 529.3,492.8 526.9,491.3 524.7,489.6 522.7,487.8 520.9,485.9 519.4,483.8 518.2,481.7 517.2,479.5 516.5,477.3 516.0,475.0 515.9,472.7 516.0,470.4 516.5,468.1 517.2,465.9 518.2,463.7 519.4,461.6 520.9,459.6 522.7,457.6 524.7,455.8 526.9,454.1 529.3,452.6 531.9,451.2 534.7,449.9 537.6,448.9 540.6,448.0 543.8,447.3 547.0,446.8 550.2,446.5 553.5,446.4 556.8,446.5 560.0,446.8 563.2,447.3 566.4,448.0 569.4,448.9 572.3,449.9 575.1,451.2 577.7,452.6 580.1,454.1 582.3,455.8 584.3,457.6 586.1,459.6 587.6,461.6 588.8,463.7 589.8,465.9 590.5,468.1 591.0,470.4" fill="url(#pk)"/>
    <line x1="619.6" y1="768.9" x2="380" y2="599.4" stroke="#05a005" stroke-width="1.8" shape-rendering="crispEdges"/>
    <line x1="619.6" y1="768.9" x2="910" y2="563.5" stroke="#b80808" stroke-width="1.8" shape-rendering="crispEdges"/>
    <line x1="620" y1="524" x2="620" y2="769" stroke="#0a0a8a" stroke-width="2"/>
  </g>
</svg>
</body></html>
